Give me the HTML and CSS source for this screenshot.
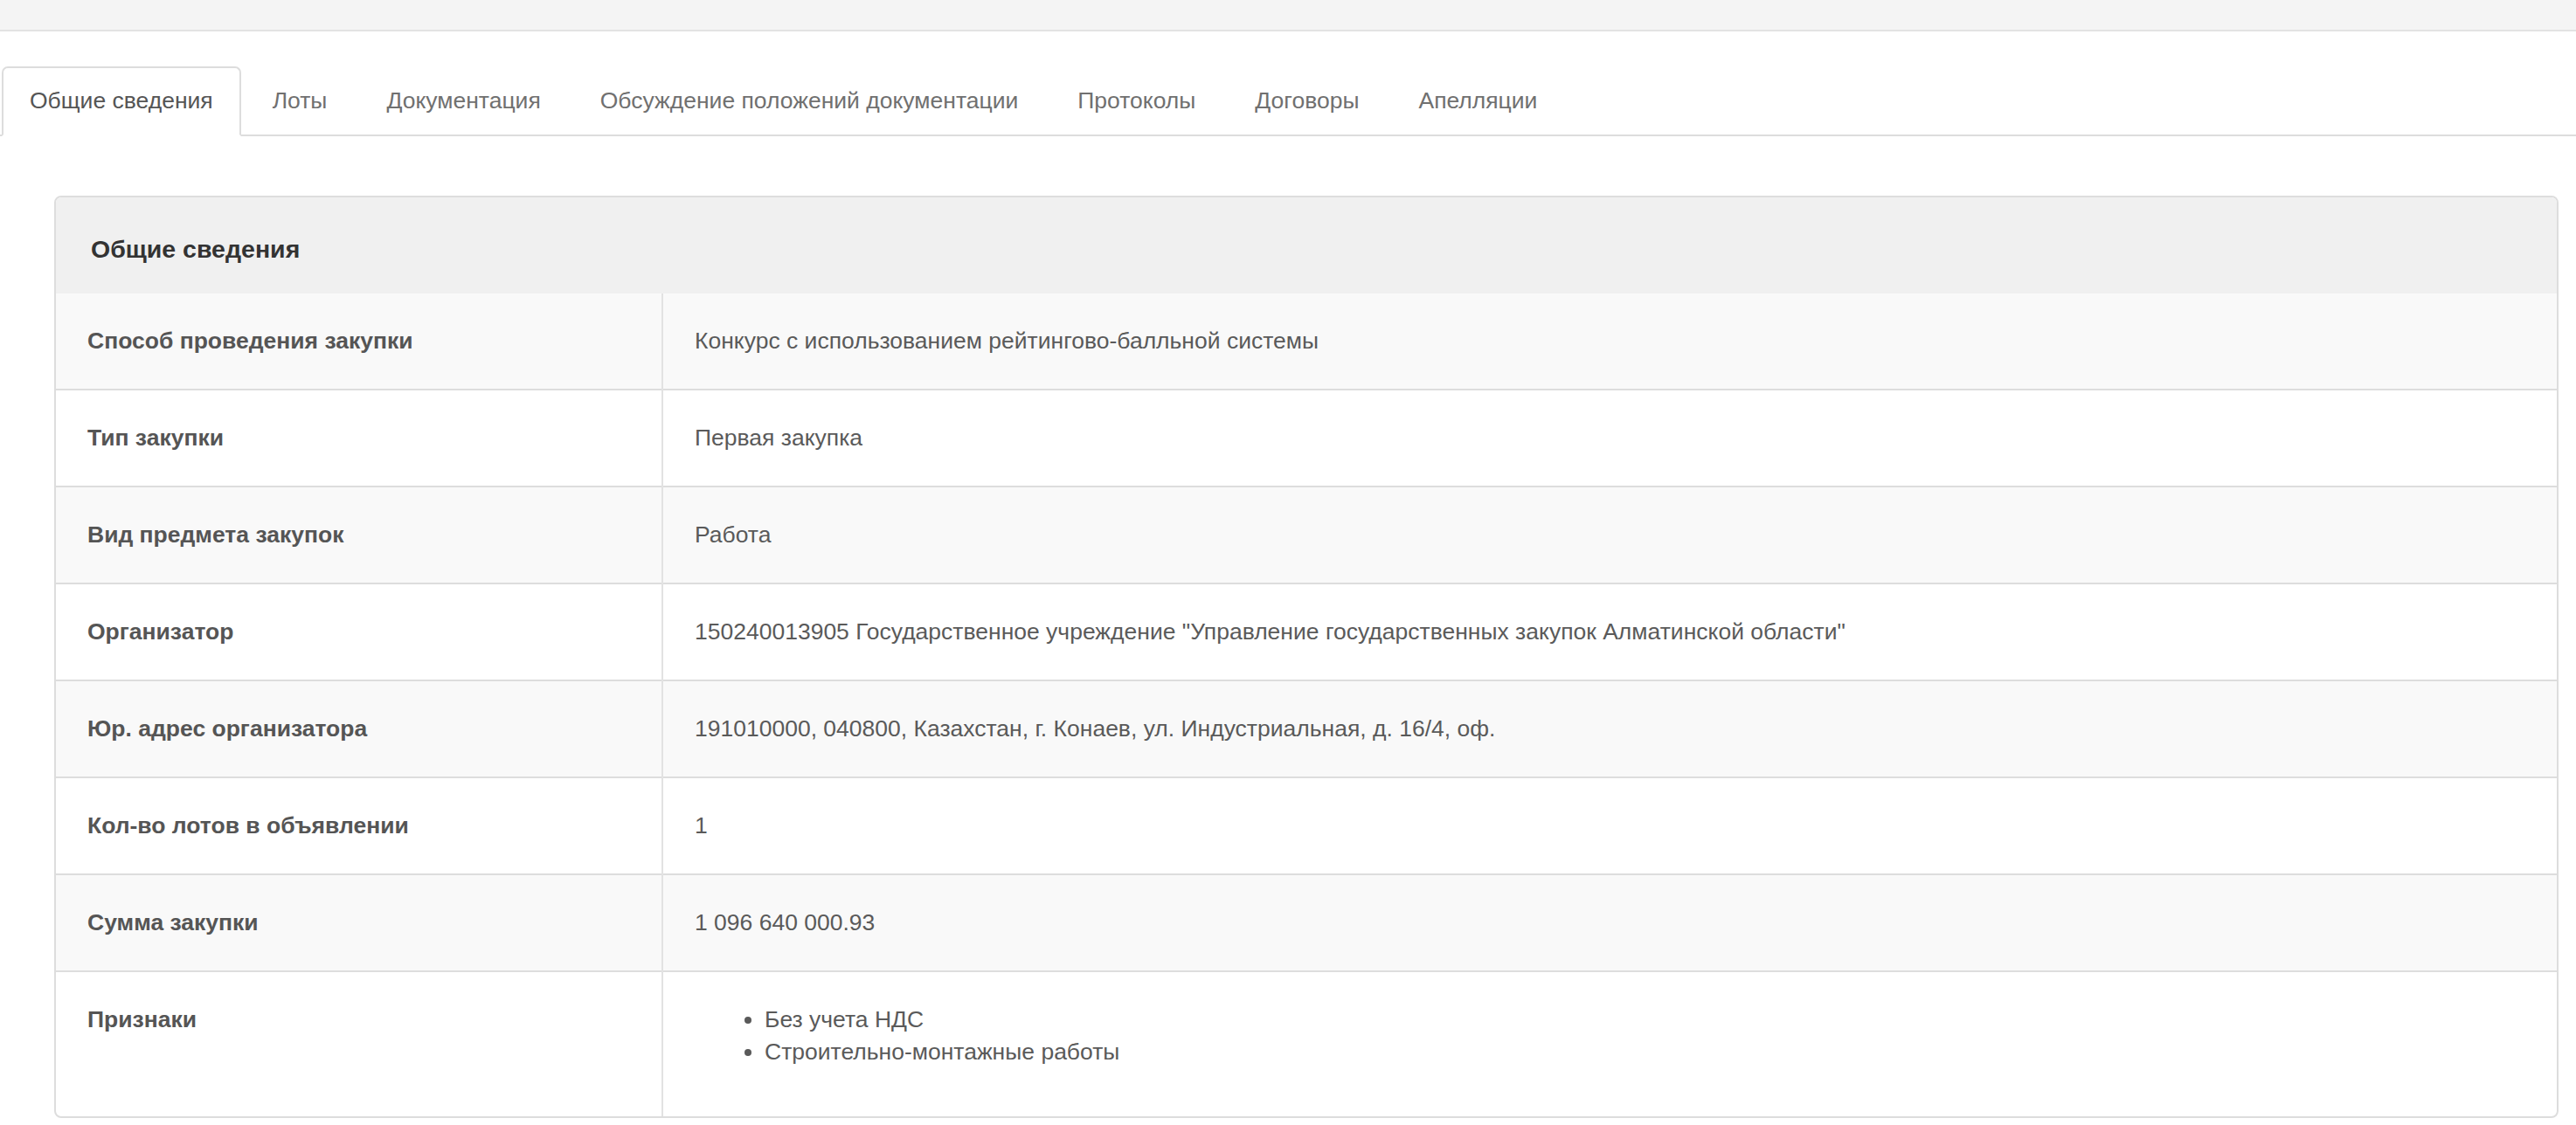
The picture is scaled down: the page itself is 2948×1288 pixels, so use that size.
FILE: index.html
```html
<!DOCTYPE html>
<html lang="ru">
<head>
<meta charset="utf-8">
<title>Общие сведения</title>
<link rel="stylesheet" href="styles.css">
</head>
<body>
<div class="topbar"></div>
<ul class="tabs">
  <li class="tab active"><a>Общие сведения</a></li>
  <li class="tab"><a>Лоты</a></li>
  <li class="tab"><a>Документация</a></li>
  <li class="tab"><a>Обсуждение положений документации</a></li>
  <li class="tab"><a>Протоколы</a></li>
  <li class="tab"><a>Договоры</a></li>
  <li class="tab"><a>Апелляции</a></li>
</ul>
<div class="panel">
  <div class="panel-heading">Общие сведения</div>
  <table class="info">
    <colgroup><col class="col-label"><col></colgroup>
    <tbody>
      <tr class="odd"><th>Способ проведения закупки</th><td>Конкурс с использованием рейтингово-балльной системы</td></tr>
      <tr><th>Тип закупки</th><td>Первая закупка</td></tr>
      <tr class="odd"><th>Вид предмета закупок</th><td>Работа</td></tr>
      <tr><th>Организатор</th><td>150240013905 Государственное учреждение "Управление государственных закупок Алматинской области"</td></tr>
      <tr class="odd"><th>Юр. адрес организатора</th><td>191010000, 040800, Казахстан, г. Конаев, ул. Индустриальная, д. 16/4, оф.</td></tr>
      <tr><th>Кол-во лотов в объявлении</th><td>1</td></tr>
      <tr class="odd"><th>Сумма закупки</th><td>1 096 640 000.93</td></tr>
      <tr><th>Признаки</th><td><ul class="signs"><li>Без учета НДС</li><li>Строительно-монтажные работы</li></ul></td></tr>
    </tbody>
  </table>
</div>
</body>
</html>
```
FILE: styles.css
```css
html, body {
  margin: 0;
  padding: 0;
  background: #fff;
}
body {
  font-family: "Liberation Sans", Arial, sans-serif;
  font-size: 26.5px;
  line-height: 37.5px;
  color: #555;
  overflow: hidden;
}
.topbar {
  height: 34px;
  background: #f4f4f4;
  border-bottom: 2px solid #e3e3e3;
}
.tabs {
  list-style: none;
  margin: 40px 0 0 0;
  padding: 0 0 0 2px;
  display: flex;
  border-bottom: 2px solid #ddd;
}
.tab {
  margin: 0 4px -2px 0;
}
.tab a {
  display: block;
  padding: 19px 30px;
  border: 2px solid transparent;
  border-radius: 7px 7px 0 0;
  color: #707070;
}
.tab.active a {
  color: #555;
  background: #fff;
  border-color: #ddd #ddd transparent;
}
.panel {
  margin: 68px 20px 0 62px;
  border: 2px solid #ddd;
  border-radius: 8px;
  overflow: hidden;
}
.panel-heading {
  background: #f0f0f0;
  padding: 41px 40px 32px;
  line-height: 37px;
  font-size: 28.5px;
  font-weight: bold;
  color: #333;
}
.info {
  width: 100%;
  border-collapse: collapse;
  table-layout: fixed;
}
.col-label {
  width: 694px;
}
.info th,
.info td {
  padding: 36px;
  line-height: 37px;
  text-align: left;
  vertical-align: top;
  border-top: 2px solid #ddd;
}
.info tr:first-child th,
.info tr:first-child td {
  border-top: 0;
}
.info th {
  font-weight: bold;
  color: #555;
}
.info td {
  border-left: 2px solid #e2e2e2;
  color: #5a5a5a;
}
.info tr.odd {
  background: #f9f9f9;
}
.signs {
  margin: 0 0 18.75px 0;
  padding: 0 0 0 80px;
}
.signs li {
  line-height: 37.5px;
}
```
